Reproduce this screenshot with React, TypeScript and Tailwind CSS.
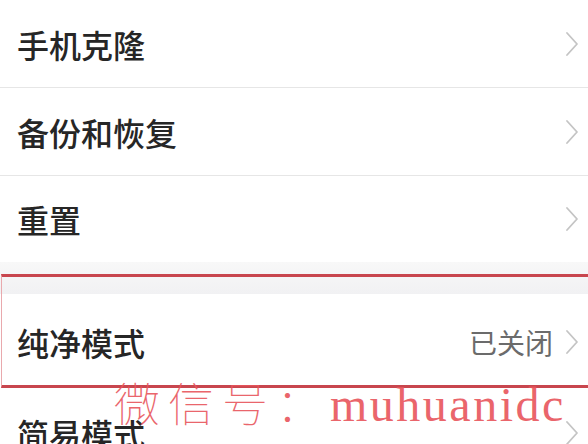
import React from "react";

const Chevron = () => (
  <svg width="14" height="26" viewBox="0 0 14 26" className="shrink-0">
    <path d="M2 2 L12 13 L2 24" fill="none" stroke="#c4c4c4" strokeWidth="1.8" strokeLinecap="round" strokeLinejoin="round" />
  </svg>
);

const Row = ({ label, value, h, divider }: { label: string; value?: string; h: string; divider?: boolean }) => (
  <div className={`flex items-center pl-[17px] pr-[9px] ${h} ${divider ? "border-b border-[#e6e6e6]" : ""}`}>
    <span className="flex-1 text-[32px] leading-none font-medium text-[#262626]">{label}</span>
    {value && <span className="mr-[12px] text-[28px] leading-none text-[#6b6b6b]">{value}</span>}
    <Chevron />
  </div>
);

export default function App() {
  return (
    <div
      className="relative w-[588px] h-[444px] overflow-hidden bg-white"
      style={{ fontFamily: '"Noto Sans CJK SC", "Noto Sans", sans-serif' }}
    >
      <div className="flex flex-col">
        <Row label="手机克隆" h="h-[88px]" divider />
        <Row label="备份和恢复" h="h-[88px]" divider />
        <Row label="重置" h="h-[86px]" />
        <div className="h-[32px] bg-gradient-to-b from-[#f8f8f8] to-[#f1f1f3]" />
        <Row label="纯净模式" value="已关闭" h="h-[96px]" />
        <Row label="简易模式" h="h-[86px]" />
      </div>
      {/* red annotation box */}
      <div className="absolute left-[1px] top-[274px] w-[600px] h-[114px] border-t-[3px] border-b-[3px] border-l border-t-[#c8464e] border-b-[#c8464e] border-l-[#e9a9ad]" />
      {/* watermark */}
      <div className="absolute left-[114px] top-[378px] flex items-baseline text-[#e8555c] opacity-90 whitespace-nowrap">
        <span className="text-[46px] leading-none font-thin tracking-[8px]" style={{ fontFamily: '"Noto Sans CJK SC", sans-serif' }}>微信号：</span>
        <span className="text-[48px] leading-none tracking-[2.5px]" style={{ fontFamily: '"Liberation Serif", serif' }}>muhuanidc</span>
      </div>
    </div>
  );
}
